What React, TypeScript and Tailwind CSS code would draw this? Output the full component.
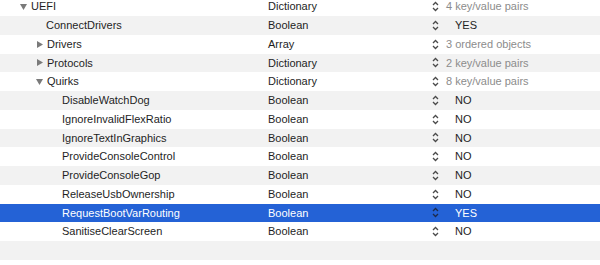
type Row = {
  key: string;
  level: number;
  toggle?: "open" | "closed";
  type: string;
  value: string;
  dim?: boolean;
  selected?: boolean;
};

const rows: Row[] = [
  { key: "UEFI", level: 0, toggle: "open", type: "Dictionary", value: "4 key/value pairs", dim: true },
  { key: "ConnectDrivers", level: 1, type: "Boolean", value: "YES" },
  { key: "Drivers", level: 1, toggle: "closed", type: "Array", value: "3 ordered objects", dim: true },
  { key: "Protocols", level: 1, toggle: "closed", type: "Dictionary", value: "2 key/value pairs", dim: true },
  { key: "Quirks", level: 1, toggle: "open", type: "Dictionary", value: "8 key/value pairs", dim: true },
  { key: "DisableWatchDog", level: 2, type: "Boolean", value: "NO" },
  { key: "IgnoreInvalidFlexRatio", level: 2, type: "Boolean", value: "NO" },
  { key: "IgnoreTextInGraphics", level: 2, type: "Boolean", value: "NO" },
  { key: "ProvideConsoleControl", level: 2, type: "Boolean", value: "NO" },
  { key: "ProvideConsoleGop", level: 2, type: "Boolean", value: "NO" },
  { key: "ReleaseUsbOwnership", level: 2, type: "Boolean", value: "NO" },
  { key: "RequestBootVarRouting", level: 2, type: "Boolean", value: "YES", selected: true },
  { key: "SanitiseClearScreen", level: 2, type: "Boolean", value: "NO" },
];

const indent = ["pl-[20px]", "pl-[36px]", "pl-[62px]"];

function Triangle({ open }: { open: boolean }) {
  return (
    <svg width="7" height="7" viewBox="0 0 7 7" className="mr-[4px] shrink-0">
      {open ? (
        <polygon points="0,1 7,1 3.5,7" fill="#7a7a7a" />
      ) : (
        <polygon points="1,0 7,3.5 1,7" fill="#7a7a7a" />
      )}
    </svg>
  );
}

function Stepper({ selected }: { selected?: boolean }) {
  const c = selected ? "#1c2a4a" : "#4a4a4a";
  return (
    <svg width="7" height="11" viewBox="0 0 7 11" className="shrink-0">
      <polyline points="1,4 3.5,1.5 6,4" fill="none" stroke={c} strokeWidth="1.3" />
      <polyline points="1,7 3.5,9.5 6,7" fill="none" stroke={c} strokeWidth="1.3" />
    </svg>
  );
}

export default function App() {
  return (
    <div className="h-[265px] w-[600px] overflow-hidden bg-white font-['Liberation_Sans',Arial,sans-serif] text-[11px] text-[#1e1e1e]">
      <div className="-mt-[2.75px]">
        {rows.map((row, i) => {
          const bg = row.selected ? "bg-[#2462d6] text-white" : i % 2 ? "bg-[#f2f2f2]" : "bg-white";
          const hasToggle = !!row.toggle;
          return (
            <div key={row.key} className={`flex h-[18.75px] items-center ${bg}`}>
              <div
                className={`flex w-[268px] items-center ${
                  hasToggle ? indent[row.level] : row.level === 1 ? "pl-[46px]" : indent[row.level]
                }`}
              >
                {row.toggle && <Triangle open={row.toggle === "open"} />}
                <span>{row.key}</span>
              </div>
              <div className="w-[164px]">{row.type}</div>
              <div className="flex items-center">
                <Stepper selected={row.selected} />
                <span
                  className={
                    row.dim
                      ? "ml-[7px] text-[#8c8c8c]"
                      : row.selected
                      ? "ml-[16px] text-white"
                      : "ml-[16px] text-[#1e1e1e]"
                  }
                >
                  {row.value}
                </span>
              </div>
            </div>
          );
        })}
        <div className="h-[18.75px] bg-[#f2f2f2]" />
        <div className="h-[18.75px] bg-white" />
      </div>
    </div>
  );
}
